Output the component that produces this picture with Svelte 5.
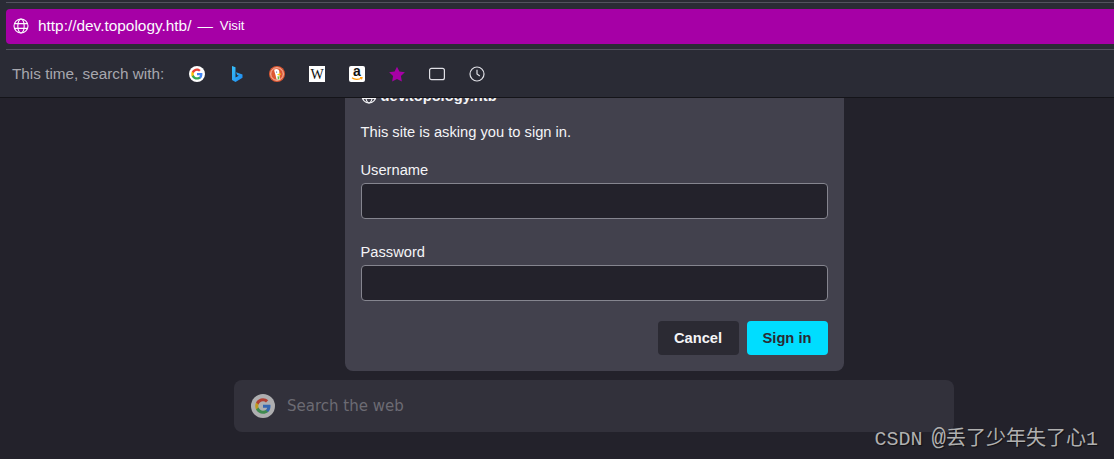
<script lang="ts">
	const engines = ['google', 'bing', 'duck', 'wiki', 'amazon', 'star', 'tab', 'clock'];
</script>

<div class="page">
	<header class="urlbar">
		<div class="urlbar__rule"></div>
		<div class="result">
			<svg class="globe" viewBox="0 0 16 16" width="16" height="16" fill="none" stroke="currentColor" stroke-width="1.1">
				<circle cx="8" cy="8" r="7" />
				<ellipse cx="8" cy="8" rx="3.2" ry="7" />
				<path d="M1.2 5.6h13.6M1.2 10.4h13.6" />
			</svg>
			<span class="result__url">http://dev.topology.htb/</span>
			<span class="result__dash">—</span>
			<span class="result__action">Visit</span>
		</div>
		<div class="urlbar__rule urlbar__rule--lower"></div>
		<div class="oneoffs">
			<span class="oneoffs__label">This time, search with:</span>
			<div class="oneoffs__icons">
				{#each engines as engine}
					<span class="engine">
						{#if engine === 'google'}
							<svg viewBox="0 0 16 16" width="16" height="16">
								<circle cx="8" cy="8" r="8" fill="#fff" />
								<path d="M13.400 8.200c0-.5 0-.9-.1-1.300H8v2.400h3c-.1.700-.5 1.300-1.100 1.700v1.500h1.800c1.100-1 1.700-2.500 1.700-4.300z" fill="#4285f4" />
								<path d="M8 13.600c1.500 0 2.800-.5 3.700-1.400l-1.800-1.500c-.5.300-1.100.6-1.900.6-1.500 0-2.700-1-3.100-2.400H2.800v1.500c.9 1.900 3 3.200 5.200 3.200z" fill="#34a853" />
								<path d="M4.900 8.900c-.1-.3-.2-.6-.2-.9s.1-.6.200-.9V5.600H2.800C2.500 6.300 2.300 7.100 2.300 8s.2 1.700.5 2.400l2.100-1.500z" fill="#fbbc05" />
								<path d="M8 4.700c.8 0 1.500.3 2.100.8l1.600-1.600C10.700 3 9.500 2.400 8 2.400c-2.200 0-4.300 1.300-5.200 3.200l2.100 1.500C5.300 5.700 6.500 4.700 8 4.700z" fill="#ea4335" />
							</svg>
						{:else if engine === 'bing'}
							<svg viewBox="0 0 16 16" width="16" height="16">
								<defs>
									<linearGradient id="bing" x1="0" y1="0" x2="1" y2="1">
										<stop offset="0" stop-color="#37c0f8" />
										<stop offset="1" stop-color="#1e88f0" />
									</linearGradient>
								</defs>
								<path d="M3 0l3.500 1.200v10.400l3.300-1.900-1.700-.8-1.100-2.700 6.500 2.300v3.300L6.500 16 3 14.100z" fill="url(#bing)" />
							</svg>
						{:else if engine === 'duck'}
							<svg viewBox="0 0 16 16" width="16" height="16">
								<circle cx="8" cy="8" r="8" fill="#de5833" />
								<circle cx="8" cy="8" r="6.300" fill="none" stroke="#f6c9b8" stroke-width=".9" />
								<path d="M5.300 3.600c2.200-1.100 4.500-.4 4.900 1.500.3 1.400.2 2.500.3 3.600l.4 4.700c-1.100.4-2.200.4-3.300.2L6.500 9C6.200 7.500 5 5.500 5.300 3.600z" fill="#fff" />
								<path d="M8 8.200l3.400-.9.600 1.100-2.500 1.100z" fill="#fdd20a" />
								<path d="M8.500 10.300l1.800.2-.1 2.700-1.500.2z" fill="#65bc46" />
								<circle cx="7.600" cy="6" r=".6" fill="#2d4f8e" />
							</svg>
						{:else if engine === 'wiki'}
							<span class="wiki">W</span>
						{:else if engine === 'amazon'}
							<span class="amazon">
								<span>a</span>
								<svg viewBox="0 0 12 4" width="12" height="4" fill="none" stroke="#f90" stroke-width="1.200">
									<path d="M1 .8c2.500 2 7 2 9.500.2M9 .4l2 .2-.5 1.800" />
								</svg>
							</span>
						{:else if engine === 'star'}
							<svg viewBox="0 0 16 16" width="16" height="16">
								<path d="M8 .8l2.400 4.800 5.500.7-4 3.800 1 5.400L8 13l-4.900 2.500 1-5.400-4-3.800 5.500-.7z" fill="#a600a6" />
							</svg>
						{:else if engine === 'tab'}
							<svg viewBox="0 0 16 16" width="16" height="16" fill="none" stroke="#e0e0e6" stroke-width="1.200">
								<rect x=".6" y="2.300" width="14.800" height="11.400" rx="2" />
							</svg>
						{:else}
							<svg viewBox="0 0 16 16" width="16" height="16" fill="none" stroke="#e0e0e6" stroke-width="1.200">
								<circle cx="8" cy="8" r="7" />
								<path d="M8 3.800V8l2.800 2" />
							</svg>
						{/if}
					</span>
				{/each}
			</div>
		</div>
	</header>

	<main class="content">
		<form class="dialog">
			<div class="dialog__title">
				<svg class="dialog__globe" viewBox="0 0 16 16" width="16" height="16" fill="none" stroke="currentColor" stroke-width="1.100">
					<circle cx="8" cy="8" r="7" />
					<ellipse cx="8" cy="8" rx="3.200" ry="7" />
					<path d="M1.200 5.600h13.600M1.200 10.400h13.600" />
				</svg>
				<span>dev.topology.htb</span>
			</div>
			<p class="dialog__message">This site is asking you to sign in.</p>
			<label class="field">
				<span>Username</span>
				<input type="text" />
			</label>
			<label class="field">
				<span>Password</span>
				<input type="password" />
			</label>
			<div class="dialog__buttons">
				<button type="button" class="btn btn--cancel">Cancel</button>
				<button type="button" class="btn btn--primary">Sign in</button>
			</div>
		</form>

		<div class="search">
			<svg viewBox="0 0 24 24" width="24" height="24">
				<circle cx="12" cy="12" r="12" fill="#aeaeb0" />
				<path d="M19.500 12.300c0-.6 0-1.100-.1-1.600H12v3h4.200c-.2 1-.7 1.800-1.500 2.400v2h2.400c1.500-1.400 2.400-3.400 2.400-5.800z" fill="#3566b0" />
				<path d="M12 19.700c2.100 0 3.800-.7 5.100-1.800l-2.400-2c-.7.500-1.600.8-2.700.8-2 0-3.800-1.400-4.400-3.200H5v2c1.200 2.500 4 4.200 7 4.200z" fill="#3f8a50" />
				<path d="M7.600 13.500c-.2-.5-.3-1-.3-1.500s.1-1 .3-1.500v-2H5c-.5 1-.8 2.300-.8 3.500s.3 2.500.8 3.500z" fill="#c09a20" />
				<path d="M12 7.300c1.200 0 2.200.4 3 1.200l2.200-2.200C15.800 5 14.100 4.300 12 4.300c-3 0-5.800 1.700-7 4.200l2.600 2c.6-1.800 2.400-3.200 4.400-3.200z" fill="#b04033" />
			</svg>
			<span>Search the web</span>
		</div>
	</main>

	<div class="watermark">CSDN <span class="watermark__at">@</span>丢了少年失了心1</div>
</div>

<style>
	:global(body) {
		margin: 0;
		background: #1f1e27;
	}

	.page {
		position: relative;
		height: 459px;
		overflow: hidden;
		background: #23222b;
		font-family: 'Liberation Sans', Arial, sans-serif;
	}

	.urlbar {
		position: relative;
		z-index: 2;
		box-sizing: border-box;
		height: 98px;
		padding: 2px 0 0 6px;
		background: #2a2b35;
		border-bottom: 1px solid #141419;
	}

	.urlbar__rule {
		height: 1px;
		background: #52525e;
	}

	.urlbar__rule--lower {
		margin-top: 5px;
	}

	.result {
		display: flex;
		align-items: center;
		box-sizing: border-box;
		height: 35px;
		margin-top: 6px;
		padding: 0 0 2px 7px;
		border-radius: 4px 0 0 4px;
		background: #a600a6;
		color: #fbfbfe;
	}

	.globe {
		flex: none;
		margin-top: 1px;
	}

	.result__url {
		margin-left: 9px;
		font-size: 15.4px;
	}

	.result__dash {
		margin-left: 6px;
		font-size: 15.4px;
	}

	.result__action {
		margin-left: 7px;
		font-size: 13.2px;
	}

	.oneoffs {
		display: flex;
		align-items: center;
		height: 47px;
		margin-left: -6px;
		padding-left: 12px;
	}

	.oneoffs__label {
		width: 167px;
		color: #a7a7ae;
		font-size: 15.3px;
		white-space: nowrap;
	}

	.oneoffs__icons {
		display: flex;
		gap: 24px;
		margin-left: 10px;
	}

	.engine {
		display: flex;
		align-items: center;
		justify-content: center;
		width: 16px;
		height: 16px;
	}

	.wiki {
		display: block;
		width: 16px;
		height: 16px;
		background: #fff;
		color: #111;
		font-family: 'Liberation Serif', serif;
		font-size: 14px;
		line-height: 17px;
		text-align: center;
	}

	.amazon {
		display: flex;
		flex-direction: column;
		align-items: center;
		width: 16px;
		height: 16px;
		border-radius: 2px;
		background: #fff;
		color: #111;
		font-size: 14px;
		font-weight: 700;
		line-height: 11px;
	}

	.content {
		display: flex;
		flex-direction: column;
		align-items: center;
		padding-left: 74px;
	}

	.dialog {
		box-sizing: border-box;
		width: 499px;
		height: 283px;
		margin-top: -10px;
		padding: 0 16px;
		border-radius: 0 0 8px 8px;
		background: #42414d;
		color: #f4f4f7;
		font-size: 14.7px;
	}

	.dialog__title {
		display: flex;
		align-items: center;
		height: 17px;
		margin-top: -1px;
		font-size: 14.7px;
		font-weight: 700;
		gap: 4px;
	}

	.dialog__message {
		margin: 19px 0 0;
		line-height: 18px;
	}

	.field {
		display: block;
		margin-top: 20px;
	}

	.field + .field {
		margin-top: 24px;
	}

	.field span {
		display: block;
		line-height: 18px;
		margin-bottom: 4px;
	}

	.field input {
		display: block;
		box-sizing: border-box;
		width: 100%;
		height: 36px;
		border: 1px solid #85858f;
		border-radius: 4px;
		background: #23222b;
		color: #fbfbfe;
	}

	.dialog__buttons {
		display: flex;
		justify-content: flex-end;
		gap: 8px;
		margin-top: 20px;
	}

	.btn {
		width: 81px;
		height: 34px;
		border: 0;
		border-radius: 4px;
		font-family: inherit;
		font-size: 14.7px;
		font-weight: 700;
	}

	.btn--cancel {
		background: #2b2a33;
		color: #f4f4f7;
	}

	.btn--primary {
		background: #00ddff;
		color: #2b2a33;
	}

	.search {
		display: flex;
		align-items: center;
		box-sizing: border-box;
		width: 720px;
		height: 52px;
		margin-top: 9px;
		padding-left: 17px;
		gap: 12px;
		border-radius: 8px;
		background: #32313b;
		color: #6c6b73;
	}

	.search span {
		font-family: 'DejaVu Sans', sans-serif;
		font-size: 15px;
	}

	.watermark {
		position: absolute;
		right: 16px;
		bottom: 8px;
		color: #b0b0b0;
		font-family: 'Liberation Mono', 'Noto Sans CJK SC', monospace;
		font-size: 20px;
		white-space: nowrap;
		word-spacing: -3px;
		text-shadow: 1px 1px 1px rgba(0, 0, 0, 0.5);
	}

	.watermark__at {
		font-size: 24px;
		line-height: 1;
	}
</style>
